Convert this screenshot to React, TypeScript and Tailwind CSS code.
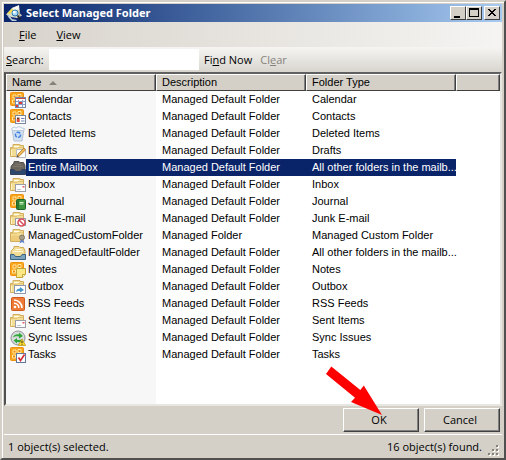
import { useState, type ReactNode } from "react";

type IconName =
  | "calendar" | "contacts" | "trash" | "drafts" | "mailbox" | "inbox" | "journal" | "junk"
  | "custom" | "default" | "notes" | "outbox" | "rss" | "sent" | "sync" | "tasks";

const rows: { name: string; description: string; type: string; icon: IconName }[] = [
  { name: "Calendar", description: "Managed Default Folder", type: "Calendar", icon: "calendar" },
  { name: "Contacts", description: "Managed Default Folder", type: "Contacts", icon: "contacts" },
  { name: "Deleted Items", description: "Managed Default Folder", type: "Deleted Items", icon: "trash" },
  { name: "Drafts", description: "Managed Default Folder", type: "Drafts", icon: "drafts" },
  { name: "Entire Mailbox", description: "Managed Default Folder", type: "All other folders in the mailb...", icon: "mailbox" },
  { name: "Inbox", description: "Managed Default Folder", type: "Inbox", icon: "inbox" },
  { name: "Journal", description: "Managed Default Folder", type: "Journal", icon: "journal" },
  { name: "Junk E-mail", description: "Managed Default Folder", type: "Junk E-mail", icon: "junk" },
  { name: "ManagedCustomFolder", description: "Managed Folder", type: "Managed Custom Folder", icon: "custom" },
  { name: "ManagedDefaultFolder", description: "Managed Default Folder", type: "All other folders in the mailb...", icon: "default" },
  { name: "Notes", description: "Managed Default Folder", type: "Notes", icon: "notes" },
  { name: "Outbox", description: "Managed Default Folder", type: "Outbox", icon: "outbox" },
  { name: "RSS Feeds", description: "Managed Default Folder", type: "RSS Feeds", icon: "rss" },
  { name: "Sent Items", description: "Managed Default Folder", type: "Sent Items", icon: "sent" },
  { name: "Sync Issues", description: "Managed Default Folder", type: "Sync Issues", icon: "sync" },
  { name: "Tasks", description: "Managed Default Folder", type: "Tasks", icon: "tasks" },
];

function OutlookTile() {
  return (
    <g>
      <rect x="0.5" y="0.5" width="13" height="13" rx="1" fill="#fba51c" stroke="#ee930f" />
      <path d="M3 3h3v3H3zM8 2.500h3v3H8zM2.500 8h3v3h-3zM6.500 6.500h3v3h-3z" fill="#f08c10" stroke="#ffe9a0" />
    </g>
  );
}

function Folder() {
  return (
    <g>
      <path d="M.5 13.500V4.500H3v-3h7v1h3.500v11z" fill="#f3dc93" stroke="#d0ae5e" />
      <path d="M4 3.500h5" stroke="#fffdf0" />
      <path d="M1 5.500h6l1-1h5" fill="none" stroke="#e3c576" />
      <path d="M1.500 7v6" stroke="#fff3c9" />
    </g>
  );
}

function Envelope() {
  return (
    <g>
      <rect x="5.500" y="7.500" width="10" height="7" fill="#fff" stroke="#9a9ca8" />
      <path d="M7 12.500h4" stroke="#bcc0cc" />
      <path d="M12.500 9h2v1.500h-2z" fill="#e0565c" />
    </g>
  );
}

function Tray({ dark }: { dark?: boolean }) {
  return (
    <g>
      <path d="M1.500 5.500 4 3V1.500h5l1 1h3.500l1.500 3.500v6H1V7z" fill={dark ? "#6a665e" : "#f3dc93"} stroke={dark ? "#55534f" : "#c9a858"} />
      <path d="M3 6.500h10M5.500 4.500h6" stroke={dark ? "#7f796c" : "#fff8dc"} />
      <path d="M.5 9.500H4l1.500 2h5l1.500-2h3.500v5H.5z" fill={dark ? "#2c4870" : "#7ba3bd"} stroke={dark ? "#33415c" : "#3d637e"} />
    </g>
  );
}

const art: Record<IconName, ReactNode> = {
  calendar: (
    <>
      <OutlookTile />
      <rect x="5.500" y="5.500" width="10" height="10" fill="#fff" stroke="#7686ad" />
      <path d="M6 6.500h9" stroke="#c94a48" />
      <path d="M6 9.500h9M6 12.500h9M8.500 8v7M12.500 8v7" stroke="#8b9cc4" />
      <path d="M9 10h3v2H9zM6 13h2v2H6z" fill="#dd3c30" />
    </>
  ),
  contacts: (
    <>
      <OutlookTile />
      <rect x="5.500" y="6.500" width="10" height="8" fill="#fff" stroke="#7a869e" />
      <path d="M7 8.500h2.500V10H7z" fill="#6d4028" />
      <path d="M6.700 10h3v3h-3z" fill="#db5139" />
      <path d="M11 9.500h3.500M11 12h3.500" stroke="#7085b2" />
    </>
  ),
  trash: (
    <>
      <path d="m2 3 2 12h8l2-12z" fill="#d3e0f0" stroke="#b3c2d4" />
      <path d="M1.500 2.500 4 1l2 1 3-1.500L12 2l2.500.5-1 2h-11z" fill="#f5f8fc" stroke="#bccbdc" />
      <circle cx="8" cy="8.800" r="2.600" fill="#c5dcf7" stroke="#3f80dc" strokeWidth="1.400" strokeDasharray="4 1.200" />
    </>
  ),
  drafts: (
    <>
      <Folder />
      <path d="M6.500 6.500h9v8h-9z" fill="#fff" stroke="#b9bbc2" />
      <path d="m7 14 1-3 6-6 1.700 1.700-6 6z" fill="#f4bb55" stroke="#a37636" strokeWidth=".8" />
      <path d="m7 14 .6-1.800 1.200 1.200z" fill="#333" />
    </>
  ),
  mailbox: <Tray dark />,
  inbox: (<><Folder /><Envelope /></>),
  journal: (
    <>
      <OutlookTile />
      <rect x="6.500" y="5.500" width="9" height="10" rx="1" fill="#3d9640" stroke="#20642a" />
      <path d="M9.500 8.500h4M9.500 10h4" stroke="#d6efc9" />
      <path d="M8 6v9" stroke="#1c5524" />
    </>
  ),
  junk: (
    <>
      <Folder />
      <Envelope />
      <circle cx="11.500" cy="11.500" r="3.500" fill="#fff" stroke="#d8505a" strokeWidth="1.500" />
      <path d="m9 9 5 5" stroke="#d8505a" strokeWidth="1.500" />
    </>
  ),
  custom: (
    <>
      <Folder />
      <path d="M1 7.500h12.500v5.500H1z" fill="#edcb78" />
      <path d="m11 11-1.500 4.500L12 14l2.500 1.500L13 11z" fill="#5b82cf" />
      <circle cx="12" cy="9.500" r="2.500" fill="#a99f86" stroke="#857d69" />
    </>
  ),
  default: <Tray />,
  notes: (
    <>
      <OutlookTile />
      <path d="M6.500 6.500h9v6l-3 3h-6z" fill="#fbe885" stroke="#c6a336" />
      <path d="M15.500 12.500h-3v3" fill="#fff7c8" stroke="#c6a336" />
    </>
  ),
  outbox: (
    <>
      <Folder />
      <rect x="4.500" y="6.500" width="11" height="8" fill="#fff" stroke="#8f99ab" />
      <path d="M6 13c.5-3 2-3.500 4-3.500V8l4 3-4 2.500V12c-2 0-3 0-4 1z" fill="#4496c8" />
    </>
  ),
  rss: (
    <>
      <rect x="1.500" y="1.500" width="13" height="13" rx="1" fill="#ee7a35" stroke="#cf5a1e" />
      <path d="M4 4c4.500 0 8 3.500 8 8M4 7.200c2.700 0 4.800 2.100 4.800 4.800" fill="none" stroke="#fff" strokeWidth="1.600" />
      <circle cx="5" cy="11" r="1.300" fill="#fff" />
    </>
  ),
  sent: (<><Folder /><Envelope /></>),
  sync: (
    <>
      <circle cx="8" cy="8" r="7" fill="#d9dcdc" stroke="#8e9496" />
      <path d="M3 7.500C3.500 4.500 7 4 9 4.500V2.500L13 6 9 8.500v-2c-2-.5-4-.5-6 1z" fill="#2fa83a" />
      <path d="M12.500 9c-.5 3-3 3.500-5.500 3v1.500L3.500 10.500 7 8v1.800c2 .4 4 .2 5.500-.8z" fill="#2fa83a" />
      <path d="m12 9 3.700 6.500H8.300z" fill="#ffdc2d" stroke="#b8920c" strokeWidth=".7" />
      <path d="M12 11v2M12 13.700v1" stroke="#222" />
    </>
  ),
  tasks: (
    <>
      <OutlookTile />
      <rect x="6.500" y="6.500" width="9" height="9" fill="#fff" stroke="#62779f" />
      <path d="m8.500 10.500 2 3 4-6" fill="none" stroke="#d32a32" strokeWidth="1.600" />
    </>
  ),
};

function RowIcon({ name }: { name: IconName }) {
  return <svg viewBox="0 0 16 16" className="size-4 shrink-0" aria-hidden="true">{art[name]}</svg>;
}

function AppIcon() {
  return (
    <svg viewBox="0 0 16 16" className="size-4 shrink-0" aria-hidden="true">
      <path d="M0 9.500 6 3l7-3 1 8.500 2 2-5 2.500-6-1z" fill="#dcdccb" />
      <path d="m1 8.500 5-5 1.500 1L4 9z" fill="#f0de4c" />
      <path d="m6 3 7-2.500-.5 4L8 5z" fill="#fbfcfa" />
      <path d="m1 10 3 1 2 3 5 1-1 1H6l-3-3z" fill="#b9ccd8" />
      <path d="M13 4.500 14.500 11l-2 1z" fill="#a5a48d" />
      <circle cx="9" cy="8" r="3" fill="#a9daf4" stroke="#2c75ae" />
      <circle cx="8.200" cy="7.200" r="1.400" fill="#fff" />
      <path d="m11.500 10.500 3 4" stroke="#20242c" strokeWidth="1.700" />
    </svg>
  );
}

function CaptionButton({ label, children }: { label: string; children: ReactNode }) {
  return (
    <button aria-label={label} className="h-3.5 w-4 border border-t-white border-l-white border-r-[#404040] border-b-[#404040] bg-[#d4d0c8]">
      <svg viewBox="0 0 14 12" className="block h-3 w-3.5" shapeRendering="crispEdges" aria-hidden="true">{children}</svg>
    </button>
  );
}

function PushButton({ children }: { children: ReactNode }) {
  return (
    <button className="h-6 w-19 border border-t-white border-l-white border-r-[#404040] border-b-[#404040] bg-[#d4d0c8] pr-1 text-center shadow-[inset_-1px_-1px_0_#808080]">
      {children}
    </button>
  );
}

const headCell =
  "h-[17px] border border-t-white border-l-white border-r-[#404040] border-b-[#404040] bg-[#d4d0c8] px-[5px] text-left font-normal shadow-[inset_-1px_0_0_#808080]";

export default function App() {
  const [selected, setSelected] = useState("Entire Mailbox");
  const [query, setQuery] = useState("");

  return (
    <main className="flex min-h-screen flex-col border-2 border-t-[#d4d0c8] border-l-[#d4d0c8] border-r-[#505050] border-b-[#505050] bg-[#d4d0c8] p-0.5 pb-0 font-['Open_Sans','Noto_Sans',sans-serif] text-[11px] leading-4 text-black shadow-[inset_1px_1px_0_#fff]">
      <header className="flex h-[18px] items-center gap-1 bg-linear-to-r from-[#0a246a] to-[#a6caf0] px-0.5">
        <AppIcon />
        <h1 className="flex-1 font-['Noto_Sans',sans-serif] font-bold text-white">Select Managed Folder</h1>
        <div className="flex">
          <CaptionButton label="Minimize"><path d="M3 9h6v2H3z" /></CaptionButton>
          <CaptionButton label="Maximize"><path d="M2 1h10v9H2zM3 3v6h8V3z" fillRule="evenodd" /></CaptionButton>
          <div className="ml-0.5 flex">
            <CaptionButton label="Close"><path d="M3 2h2v1h1v1h2V3h1V2h2v1h-1v1H9v1H8v1h1v1h1v1h1v1H9V8H8V7H6v1H5v1H3V8h1V7h1V6h1V5H5V4H4V3H3z" /></CaptionButton>
          </div>
        </div>
      </header>

      <nav className="flex h-[25px] items-center gap-5 bg-linear-to-r from-[#d8d4cc] to-[#f5f4f2] px-[15px]">
        <button><span className="underline">F</span>ile</button>
        <button><span className="underline">V</span>iew</button>
      </nav>

      <form className="flex h-[25px] items-center bg-linear-to-b from-[#f6f5f3] to-[#d8d5ce] pl-0.5" onSubmit={(e) => e.preventDefault()}>
        <label htmlFor="search" className="w-[43px]"><span className="underline">S</span>earch:</label>
        <input id="search" value={query} onChange={(e) => setQuery(e.target.value)} className="h-[21px] w-[150px] bg-white px-1 outline-none" />
        <button type="submit" className="ml-[5px]">Fi<span className="underline">n</span>d Now</button>
        <button type="button" disabled className="ml-2 text-[#85837d]">Cl<span className="underline">e</span>ar</button>
      </form>

      <section className="flex-1 border-2 border-t-[#606060] border-l-[#505050] border-r-[#e8e6e1] border-b-[#e8e6e1] bg-[linear-gradient(to_right,#f7f7f7_150px,white_150px)] font-['Liberation_Sans',Arial,sans-serif] leading-[17px]">
        <table className="w-full table-fixed border-separate border-spacing-0">
          <colgroup>
            <col className="w-[150px]" />
            <col className="w-[150px]" />
            <col className="w-[150px]" />
            <col />
          </colgroup>
          <thead>
            <tr>
              <th className={headCell} aria-sort="ascending">
                <div className="flex h-[15px] items-center gap-2">
                  Name
                  <svg viewBox="0 0 8 4" className="h-1 w-2" aria-hidden="true"><path d="m4 0 4 4H0z" fill="#85827b" /></svg>
                </div>
              </th>
              <th className={headCell}><div className="flex h-[15px] items-center">Description</div></th>
              <th className={headCell}><div className="flex h-[15px] items-center">Folder Type</div></th>
              <td className={headCell} />
            </tr>
          </thead>
          <tbody>
            {rows.map((row) => {
              const tone = row.name === selected ? "bg-[#0a246a] text-white" : "";
              return (
                <tr key={row.name} onClick={() => setSelected(row.name)} className="h-[17px] whitespace-nowrap">
                  <td className="p-0">
                    <div className="flex h-[17px] items-center pl-1">
                      <RowIcon name={row.icon} />
                      <span className={`h-[17px] flex-1 pl-0.5 ${tone}`}>{row.name}</span>
                    </div>
                  </td>
                  <td className={`py-0 pr-0 pl-1.5 ${tone}`}>{row.description}</td>
                  <td className={`py-0 pr-0 pl-1.5 ${tone}`}>{row.type}</td>
                  <td className="p-0" />
                </tr>
              );
            })}
          </tbody>
        </table>
      </section>

      <div className="flex justify-end gap-[5px] pt-0.5 pr-0.5 pb-0.5">
        <div className="relative flex">
          <PushButton>OK</PushButton>
          <svg viewBox="0 0 60 52" className="pointer-events-none absolute -top-[43px] -left-5 h-[52px] w-[60px]" aria-hidden="true">
            <path d="M8.300 1.500 37.300 25l3.500-4.500L59 50 28 37l4-4.200L3 9z" fill="#f00" />
          </svg>
        </div>
        <PushButton>Cancel</PushButton>
      </div>

      <footer className="flex h-6 items-center border-t border-white pr-0.5 pl-1">
        <p className="flex-1">1 object(s) selected.</p>
        <p>16 object(s) found.</p>
        <svg viewBox="0 0 12 12" className="mt-2 ml-1.5 size-3" shapeRendering="crispEdges" aria-hidden="true">
          <path d="M9 1h2v2H9zM5 5h2v2H5zM9 5h2v2H9zM1 9h2v2H1zM5 9h2v2H5zM9 9h2v2H9z" fill="#fff" />
          <path d="M8 0h2v2H8zM4 4h2v2H4zM8 4h2v2H8zM0 8h2v2H0zM4 8h2v2H4zM8 8h2v2H8z" fill="#858078" />
        </svg>
      </footer>
    </main>
  );
}
